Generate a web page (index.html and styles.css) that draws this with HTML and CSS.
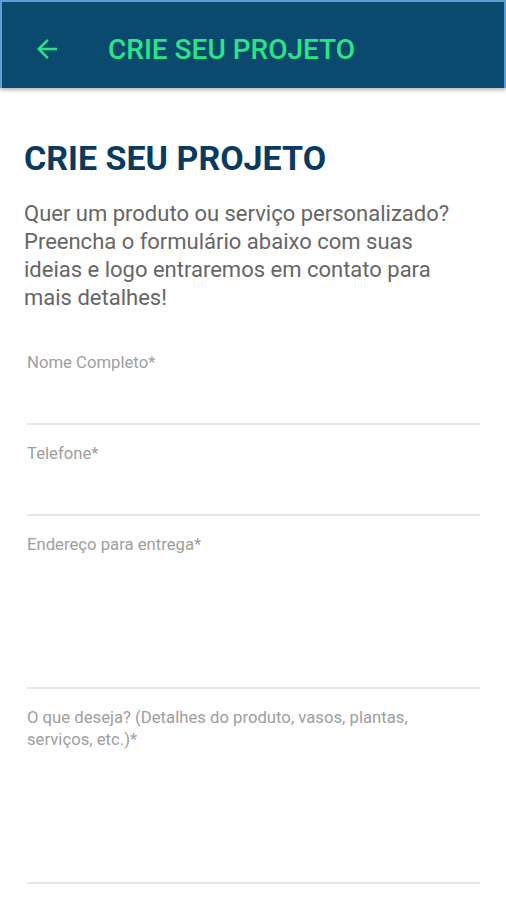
FILE: index.html
```html
<!DOCTYPE html>
<html lang="pt-BR">
<head>
    <meta charset="UTF-8">
    <meta name="viewport" content="width=device-width, initial-scale=1.0">
    <title>Crie seu projeto</title>
    <link rel="stylesheet" href="styles.css">
</head>
<body>
    <header class="app-bar">
        <button class="back-btn" aria-label="Voltar">
            <svg width="24" height="24" viewBox="0 0 24 24">
                <path d="M20 11H7.83l5.59-5.59L12 4l-8 8 8 8 1.41-1.41L7.83 13H20v-2z" fill="currentColor"/>
            </svg>
        </button>
        <h1 class="app-title">CRIE SEU PROJETO</h1>
    </header>
    <main class="content">
        <h2 class="page-title">CRIE SEU PROJETO</h2>
        <p class="intro">Quer um produto ou serviço personalizado? Preencha o formulário abaixo com suas ideias e logo entraremos em contato para mais detalhes!</p>
        <form class="project-form">
            <label class="field">
                <span class="field-label">Nome Completo*</span>
                <input type="text" class="field-input">
            </label>
            <label class="field">
                <span class="field-label">Telefone*</span>
                <input type="tel" class="field-input">
            </label>
            <label class="field">
                <span class="field-label">Endereço para entrega*</span>
                <textarea class="field-input field-area"></textarea>
            </label>
            <label class="field">
                <span class="field-label">O que deseja? (Detalhes do produto, vasos, plantas, serviços, etc.)*</span>
                <textarea class="field-input field-area"></textarea>
            </label>
        </form>
    </main>
</body>
</html>
```

FILE: styles.css
```css
body {
    font-family: Roboto, "Noto Sans", Arial, sans-serif;
    margin: 0;
    padding: 0;
    background: #fff;
}

.app-bar {
    display: flex;
    align-items: center;
    height: 78px;
    padding-top: 8px;
    background-color: #0a4a6f;
    border: 2px solid #5c9fd4;
    border-bottom: none;
    box-shadow: 0 2px 4px rgba(0, 0, 0, 0.3);
    box-sizing: content-box;
    margin-bottom: 2px;
}

.back-btn {
    background: none;
    border: none;
    padding: 0;
    margin-left: 30px;
    width: 30px;
    height: 30px;
    color: #2be585;
    display: flex;
    align-items: center;
    justify-content: center;
}

.back-btn svg {
    width: 30px;
    height: 30px;
}

.app-title {
    margin: 0 0 0 46px;
    font-size: 28px;
    font-weight: 500;
    color: #2be585;
}

.content {
    padding: 48px 24px 0;
}

.page-title {
    margin: 0;
    font-size: 34px;
    line-height: 40px;
    font-weight: 700;
    color: #0a3a60;
}

.intro {
    margin: 22px 20px 0 0;
    font-size: 22px;
    line-height: 28px;
    color: #666;
}

.project-form {
    margin: 22px 2px 0 3px;
}

.field {
    display: block;
    padding-top: 18px;
    border-bottom: 2px solid #e6e6e6;
}

.field-label {
    display: block;
    padding-right: 40px;
    font-size: 16.7px;
    line-height: 22px;
    color: #9e9e9e;
}

.field-input {
    display: block;
    width: 100%;
    height: 49px;
    border: none;
    outline: none;
    padding: 0;
    margin: 0;
    background: transparent;
    font: inherit;
    box-sizing: border-box;
    resize: none;
}

.field-area {
    height: 131px;
}
```
